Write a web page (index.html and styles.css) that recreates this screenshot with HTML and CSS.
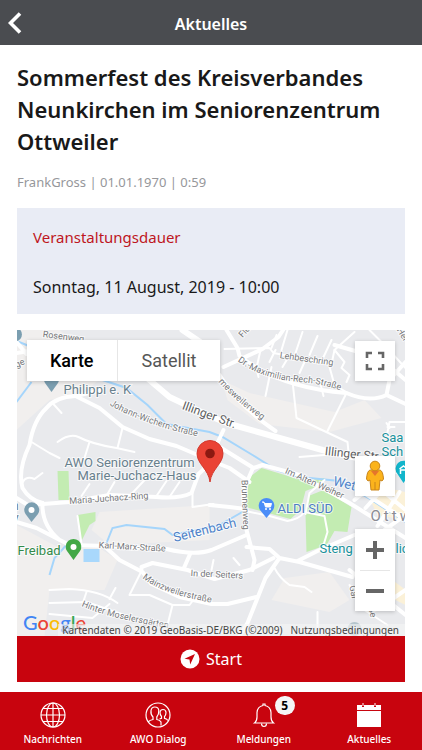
FILE: index.html
```
<!DOCTYPE html>
<html lang="de">
<head>
    <meta charset="UTF-8">
    <meta name="viewport" content="width=device-width, initial-scale=1.0">
    <title>Aktuelles</title>
    <link rel="stylesheet" href="styles.css">
</head>
<body>

    <header class="topbar">
        <button class="back" aria-label="Zurück">
            <svg width="14" height="22" viewBox="0 0 14 22"><path d="M12 1.5L2.5 11L12 20.5" fill="none" stroke="#fff" stroke-width="3.6"/></svg>
        </button>
        <span class="topbar-title">Aktuelles</span>
    </header>

    <main class="content">
        <h1>Sommerfest des Kreisverbandes Neunkirchen im Seniorenzentrum Ottweiler</h1>
        <p class="meta">FrankGross | 01.01.1970 | 0:59</p>

        <section class="duration">
            <h2>Veranstaltungsdauer</h2>
            <p>Sonntag, 11 August, 2019 - 10:00</p>
        </section>

        <section class="map">
            <svg class="map-canvas" viewBox="17 330 389 306" preserveAspectRatio="xMidYMid slice">
                <rect x="-200" y="200" width="900" height="600" fill="#e9eaed"/>

                <!-- open land -->
                <g fill="#f1efee">
                    <path d="M17 330H60L110 372L80 395L50 400L17 430Z"/>
                    <path d="M222 380L250 393L290 402L335 412L365 400L382 418L330 432L260 424L228 400Z"/>
                    <path d="M17 525L60 548L100 548L118 560L105 590L50 590L45 636H17Z"/>
                    <path d="M100 512L210 505V540L110 545L92 530Z"/>
                    <path d="M285 578L330 572L350 600L330 612L272 600Z"/>
                </g>
                <g fill="#fbf1d8">
                    <path d="M362 482L406 492V520L378 515Z"/>
                    <path d="M393 580L406 590V605L392 598Z"/>
                </g>
                <g fill="#c3ecb2">
                    <path d="M58 471H69L70 500H59Z"/>
                    <path d="M78 515L96 512V521L90 525L82 541Z"/>
                    <path d="M250 477L262 468L305 481L325 478L319 486L306 491L301 510L291 519L246 507Z"/>
                    <path d="M306 514L309 496L324 490L352 507L348 532L335 531L327 545L307 552Z"/>
                </g>
                <rect x="84" y="549" width="16" height="13" fill="#a9d8fc"/>

                <g class="water">
                    <path d="M17 402L32 382"/>
                    <path d="M17 341L27 345L60 360L103 380L127 388L148 405L167 424L210 432L223 437L253 455L277 470L300 477L340 481L372 500L406 522"/>
                    <path d="M107 543L113 528L127 525L165 529L173 535L220 525L248 509"/>
                    <path d="M50 575L55 558L66 546"/>
                </g>

                <g class="road thin">
                    <path d="M53 403L62 413M58 442Q70 433 79 437Q92 444 117 448L135 452M123 428L118 448M90 442L85 458M32 442L50 453L60 458M22 485Q25 475 35 479L43 473"/>
                    <path d="M82 496L90 484M108 494L115 482M132 494L147 478M157 496L167 481M170 497L180 482M193 493V507L214 504"/>
                    <path d="M78 516L82 544M50 590L70 589Q100 590 118 603M50 603L87 602L122 614M116 588L110 599M87 592L84 601M50 614L93 618L110 604"/>
                    <path d="M143 569L130 595L150 595L173 605L190 605L196 597M173 605L168 625"/>
                    <path d="M272 367L266 396M261 350L257 368L259 377M293 381L297 418L348 442L349 452M320 380L324 396M347 393L328 431M300 457L325 455"/>
                    <path d="M225 349L270 348L274 353L332 364L335 350L355 332M272 348L277 335M282 350L288 330M296 353L303 332M310 355L318 336M324 357L332 340M270 362L276 350M283 367L289 357M300 373L305 362M330 367L335 385L350 394"/>
                    <path d="M335 350L345 362L342 368L350 375L347 382M387 423L390 428M388 427H395M406 422H390L388 432M370 330L385 345L406 368"/>
                    <path d="M275 568Q280 578 290 585L305 587L312 592M212 570L214 560M234 558L240 565M318 612V636M350 585L365 610L388 625"/>
                    <path d="M246 511L270 516L288 521Q300 519 305 512L325 516L328 532L324 545M306 514L310 493L325 480"/>
                </g>
                <g class="road">
                    <path d="M17 353L35 350L90 342M17 342L27 354M103 390L76 396Q56 397 47 408Q34 420 30 445Q18 470 23 488Q30 500 43 503"/>
                    <path d="M76 396L100 408L123 427L150 439L177 446L210 460L230 468L250 482"/>
                    <path d="M30 505L70 502L110 495L157 497Q180 499 192 493L199 474L212 462"/>
                    <path d="M43 503Q42 525 60 540M17 522L37 528L70 545L107 546L167 549Q195 556 212 550L247 535"/>
                    <path d="M107 548L120 560L143 572L152 584L180 597L212 604L228 604L257 597M142 567L153 563L188 570L215 579L250 570L274 558M191 553L184 569"/>
                    <path d="M17 498L30 506M210 505L230 507L246 509M253 469L244 490L247 530L255 560L253 570M247 547L270 549L280 558L300 562L353 577M280 558L266 578L248 623L240 636M298 561L320 550L355 535"/>
                    <path d="M224 367L263 349L279 337L290 320M227 330L238 348L240 356Q280 388 347 393Q370 403 387 395L390 380L406 362M387 395L406 404M335 345L380 358L406 380"/>
                    <path d="M220 375Q238 405 276 431M224 430L217 445L254 468L263 465L300 475L350 503L406 538"/>
                    <path d="M360 490L406 520M378 526L400 492M366 508L387 485M355 500L375 484L406 510M385 530L406 515M350 570L406 615M390 601L406 590"/>
                </g>
                <g class="road main">
                    <path d="M125 358L150 380L170 397L210 416L230 424L280 438L323 450L353 457L406 474"/>
                    <path d="M183 330L205 345"/>
                </g>

                <!-- street names -->
                <defs>
                    <path id="wichern" d="M110 405Q148 427 215 440"/>
                    <path id="rech" d="M238 361Q262 379 300 382Q325 383 362 398"/>
                    <path id="mainz" d="M143 578Q165 597 235 606"/>
                    <path id="mesweiler" d="M219 382Q238 404 280 432"/>
                    <path id="hinter" d="M82 606Q110 619 185 631"/>
                </defs>
                <g class="street">
                    <text transform="translate(43 337) rotate(7)">Rosenweg</text>
                    <text transform="translate(17 368) rotate(-25)">ge</text>
                    <text><textPath href="#wichern">Johann-Wichern-Straße</textPath></text>
                    <text transform="translate(280 358) rotate(8)">Lehbeschring</text>
                    <text><textPath href="#rech">Dr.-Maximilian-Rech-Straße</textPath></text>
                    <text><textPath href="#mesweiler">mesweilerweg</textPath></text>
                    <text transform="translate(243 338) rotate(-48)">Flu</text>
                    <text transform="translate(397 330) rotate(58)">Her</text>
                    <text transform="translate(70 504) rotate(-4)">Maria-Juchacz-Ring</text>
                    <text transform="translate(99 548) rotate(3)">Karl-Marx-Straße</text>
                    <text transform="translate(242 480) rotate(88)">Brunnenweg</text>
                    <text transform="translate(285 473) rotate(24)">Im Alten Weiher</text>
                    <text transform="translate(191 576) rotate(3)">In der Seiters</text>
                    <text><textPath href="#mainz">Mainzweilerstraße</textPath></text>
                    <text><textPath href="#hinter">Hinter Moselersgärten</textPath></text>
                    <text transform="translate(350 586) rotate(80)">Gar</text>
                    <text transform="translate(368 600) rotate(80)">raße</text>
                </g>
                <g class="street big">
                    <text transform="translate(182 409) rotate(20)">Illinger Str.</text>
                    <text transform="translate(325 455) rotate(6)">Illinger Str.</text>
                </g>

                <!-- places -->
                <g class="place">
                    <text x="64" y="394">Philippi e. K</text>
                    <text x="65" y="467">AWO Seniorenzentrum</text>
                    <text x="78" y="480">Marie-Juchacz-Haus</text>
                    <text x="12" y="510">n</text>
                    <text x="13" y="522">y</text>
                    <text class="shop" x="278" y="513">ALDI SÜD</text>
                    <text class="green" x="18" y="555">Freibad</text>
                    <text class="teal" x="382" y="442">Saa</text>
                    <text class="teal" x="382" y="456">Sch</text>
                    <text class="teal" x="320" y="553">Steng</text>
                    <text class="teal" x="396" y="553">lic</text>
                    <text class="river" transform="translate(175 542) rotate(-14)">Seitenbach</text>
                    <text class="river" transform="translate(333 485) rotate(14)">Wet</text>
                </g>
                <text class="town" x="371" y="521">Ottw</text>

                <!-- place pins -->
                <g fill="#7b9eb0">
                    <path d="M52 392L45.500 383A7.500 7.500 0 1 1 58.500 383Z"/>
                    <path d="M32 522L26 514A7.500 7.500 0 1 1 38.500 514Z"/>
                    <path d="M17 328A5 6 0 0 1 17 341Z"/>
                </g>
                <circle cx="32" cy="510" r="3" fill="#fff"/>
                <path d="M74 560L67.500 551A7.800 7.800 0 1 1 80.500 551Z" fill="#43a846"/>
                <circle cx="74" cy="547" r="3" fill="#fff"/>
                <path d="M267 518L260.500 510A7.800 7.800 0 1 1 273.500 510Z" fill="#4b8df8"/>
                <path d="M262.500 502H264.500L266 507H271L272 503.500H265" fill="#fff" stroke="#fff"/>
                <circle cx="266.500" cy="509" r="1" fill="#fff"/>
                <circle cx="270.500" cy="509" r="1" fill="#fff"/>
                <path d="M404 483L398 474A8 8 0 1 1 410 474Z" fill="#12b5cb"/>
                <path d="M400 469L404 466L408 469M401 474V470H407V474" fill="none" stroke="#fff" stroke-width="1.500"/>
                <circle cx="355" cy="629" r="7" fill="#b5c5cc"/>
                <circle cx="355" cy="629" r="3" fill="#e9eaed"/>

                <!-- event marker -->
                <path d="M210.500 482C209 469 197.500 464 197.500 453.500A13 13 0 0 1 223.500 453.500C223.500 464 212 469 210.500 482Z" fill="#ea4335" stroke="#d23a2e"/>
                <circle cx="210.500" cy="453.500" r="4.800" fill="#8c1911"/>
            </svg>

            <div class="map-type">
                <button class="active">Karte</button>
                <button>Satellit</button>
            </div>
            <button class="map-button fullscreen" aria-label="Vollbild">
                <svg width="20" height="20" viewBox="0 0 20 20"><path d="M2 7V2H7M13 2H18V7M18 13V18H13M7 18H2V13" fill="none" stroke="#666" stroke-width="2.600"/></svg>
            </button>
            <div class="map-tools">
                <button class="map-button" aria-label="Street View">
                    <svg width="20" height="32" viewBox="0 0 20 32">
                        <path d="M5 10Q2 11 1.500 19L3 21L5 20L6 30H14L15 20L17 21L18.500 19Q18 11 15 10Z" fill="#fbb31c" stroke="#c9851a"/>
                        <path d="M10 22V30" stroke="#c9851a"/>
                        <path d="M6 11H14L10 16Z" fill="#e5762c"/>
                        <circle cx="10" cy="6" r="4.800" fill="#fbb31c" stroke="#c9851a"/>
                    </svg>
                </button>
                <div class="zoom">
                    <button class="map-button" aria-label="Vergrößern">
                        <svg width="20" height="20" viewBox="0 0 20 20"><path d="M1 10H19M10 1V19" stroke="#666" stroke-width="4"/></svg>
                    </button>
                    <button class="map-button" aria-label="Verkleinern">
                        <svg width="20" height="20" viewBox="0 0 20 20"><path d="M1 10H19" stroke="#666" stroke-width="4"/></svg>
                    </button>
                </div>
            </div>
            <div class="google"><span class="blue">G</span><span class="red">o</span><span class="yellow">o</span><span class="blue">g</span><span class="leaf">l</span><span class="red">e</span></div>
            <div class="credits">
                <span>Kartendaten © 2019 GeoBasis-DE/BKG (©2009)</span>
                <a href="#">Nutzungsbedingungen</a>
            </div>
        </section>

        <button class="start">
            <svg width="20" height="20" viewBox="0 0 20 20"><circle cx="10" cy="10" r="9.500" fill="#fff"/><path d="M15 5L4.500 9.800L9.500 10.500L10.200 15.500Z" fill="#c8040e"/></svg>
            <span>Start</span>
        </button>
    </main>

    <nav class="tabs">
        <a href="#">
            <svg width="26" height="26" viewBox="0 0 26 26" class="line"><circle cx="13" cy="13" r="12"/><ellipse cx="13" cy="13" rx="6.500" ry="12"/><path d="M13 1V25M1 13H25M3 6.500H23M3 19.500H23"/></svg>
            <span>Nachrichten</span>
        </a>
        <a href="#">
            <svg width="26" height="26" viewBox="0 0 26 26" class="line"><circle cx="13" cy="13" r="12"/><path d="M3 20Q5 18 8 17.500V15Q5.500 12.500 6 8.500Q6.500 5 9.800 5Q13.500 5 13.800 8.500Q14 12.500 11.800 15V17.500Q15 18 16 20V23.500"/><path d="M14.500 17L16.500 16.300V14.500Q14.800 12.500 15 10Q15.500 7.500 18 7.500Q20.800 7.500 21 10.500Q21 13 19.500 14.500V16.300Q21.500 16.500 23 18.500"/></svg>
            <span>AWO Dialog</span>
        </a>
        <a href="#">
            <svg width="26" height="26" viewBox="0 0 26 26" class="line"><path d="M3.500 21Q6 19 6 15V10.500Q6.500 4.500 12 3.500V2H14V3.500Q19.500 4.500 20 10.500V15Q20 19 22.500 21Z"/><path d="M10.500 21.500Q10.500 24.500 13 24.500Q15.500 24.500 15.500 21.500"/></svg>
            <b class="badge">5</b>
            <span>Meldungen</span>
        </a>
        <a href="#">
            <svg width="26" height="26" viewBox="0 0 26 26"><path d="M1 8V3H6V5H8V3H18V5H20V3H25V8ZM1 9H25V25H1Z" fill="#fff"/><path d="M7 1V4M19 1V4" stroke="#fff"/></svg>
            <span>Aktuelles</span>
        </a>
    </nav>

</body>
</html>
```

FILE: styles.css
```
* {
    box-sizing: border-box;
}
body {
    margin: 0;
    min-height: 100vh;
    display: flex;
    flex-direction: column;
    background-color: #fff;
    color: #191919;
    font-family: "Noto Sans", "Open Sans", sans-serif;
}
button {
    border: none;
    padding: 0;
    cursor: pointer;
    font-family: inherit;
}
svg {
    display: block;
}

.topbar {
    display: grid;
    grid-template-columns: 40px 1fr 40px;
    align-items: center;
    height: 45px;
    background-color: #4a4c50;
    color: #fff;
}
.back {
    padding-left: 8px;
    background: none;
}
.topbar-title {
    padding-top: 2px;
    text-align: center;
    font-size: 16px;
    font-weight: 600;
}

.content {
    display: flex;
    flex-direction: column;
    flex: 1;
    padding: 16px 17px 10px;
}
h1 {
    margin: 0 0 16px;
    font-size: 22px;
    line-height: 32px;
    font-weight: 600;
}
.meta {
    margin: 0 0 16px;
    font-size: 13px;
    line-height: 19px;
    color: #96979b;
}
.duration {
    margin-bottom: 16px;
    padding: 17px 16px 14px;
    background-color: #e9ecf5;
}
.duration h2 {
    margin: 0 0 26px;
    font-size: 15px;
    line-height: 24px;
    font-weight: 400;
    color: #be1622;
}
.duration p {
    margin: 0;
    font-size: 16px;
    line-height: 25px;
}

.map {
    position: relative;
    flex: 1;
    min-height: 306px;
    overflow: hidden;
}
.map-canvas {
    position: absolute;
    width: 100%;
    height: 100%;
    font-family: Roboto, sans-serif;
}
.road {
    fill: none;
    stroke: #fff;
    stroke-width: 4;
    stroke-linejoin: round;
    stroke-linecap: round;
}
.thin {
    stroke-width: 2;
}
.main {
    stroke-width: 6;
}
.water {
    fill: none;
    stroke: #a5d5fb;
    stroke-width: 2;
}
.map-canvas text {
    stroke: #fff;
    stroke-opacity: 0.7;
    stroke-width: 2;
    paint-order: stroke;
}
.street {
    font-size: 9px;
    fill: #77787b;
}
.big {
    font-size: 12px;
    fill: #5e5f62;
}
.place {
    font-size: 13px;
    fill: #68808d;
}
.shop {
    fill: #4d7cc4;
}
.green {
    fill: #338a4b;
}
.teal {
    fill: #18919c;
}
.river {
    fill: #4f83c9;
}
.town {
    font-size: 15px;
    fill: #8a8b94;
    letter-spacing: 3px;
}

.map-type {
    position: absolute;
    top: 10px;
    left: 10px;
    display: flex;
    background-color: #fff;
    box-shadow: 0 1px 4px rgba(0, 0, 0, 0.2);
}
.map-type button {
    height: 41px;
    padding: 0 24px;
    background: none;
    font-family: Roboto, sans-serif;
    font-size: 18px;
    color: #565656;
}
.map-type .active {
    padding: 0 23px;
    border-right: 1px solid #e6e6e6;
    font-weight: 500;
    color: #000;
}
.map-button {
    display: flex;
    align-items: center;
    justify-content: center;
    width: 40px;
    height: 40px;
    background-color: #fff;
    box-shadow: 0 1px 4px rgba(0, 0, 0, 0.2);
}
.fullscreen {
    position: absolute;
    top: 11px;
    right: 10px;
}
.map-tools {
    position: absolute;
    right: 10px;
    bottom: 25px;
    display: flex;
    flex-direction: column;
    gap: 33px;
}
.zoom {
    background-color: #fff;
    box-shadow: 0 1px 4px rgba(0, 0, 0, 0.2);
}
.zoom .map-button {
    height: 41px;
    box-shadow: none;
}
.zoom .map-button + .map-button {
    background: linear-gradient(#e6e6e6, #e6e6e6) center top / 30px 1px no-repeat;
}
.google {
    position: absolute;
    left: 6px;
    bottom: 1px;
    font-family: Lato, sans-serif;
    font-size: 20px;
    line-height: 26px;
    font-weight: 500;
}
.blue {
    color: #4285f4;
}
.red {
    color: #ea4335;
}
.yellow {
    color: #fbbc05;
}
.leaf {
    color: #34a853;
}
.credits {
    position: absolute;
    right: 0;
    bottom: 0;
    display: flex;
    gap: 8px;
    padding: 0 6px 0 4px;
    background-color: rgba(245, 245, 245, 0.6);
    font-size: 10px;
    line-height: 12px;
    white-space: nowrap;
    color: #444;
}
.credits a {
    color: #444;
    text-decoration: none;
}

.start {
    display: flex;
    align-items: center;
    justify-content: center;
    gap: 6px;
    height: 46px;
    background-color: #c8040e;
    color: #fff;
    font-size: 16px;
}

.tabs {
    display: grid;
    grid-template-columns: repeat(4, 1fr);
    height: 58px;
    background-color: #c8040e;
}
.tabs a {
    position: relative;
    display: flex;
    flex-direction: column;
    align-items: center;
    gap: 4px;
    padding-top: 10px;
    color: #fff;
    font-size: 10px;
    line-height: 14px;
    font-weight: 500;
    text-decoration: none;
}
.line {
    fill: none;
    stroke: #fff;
    stroke-width: 1.2;
}
.badge {
    position: absolute;
    top: 4px;
    left: calc(50% + 11px);
    width: 20px;
    height: 19px;
    border-radius: 10px;
    background-color: #f5f5f5;
    color: #000;
    font-size: 12px;
    line-height: 19px;
    text-align: center;
}
```
